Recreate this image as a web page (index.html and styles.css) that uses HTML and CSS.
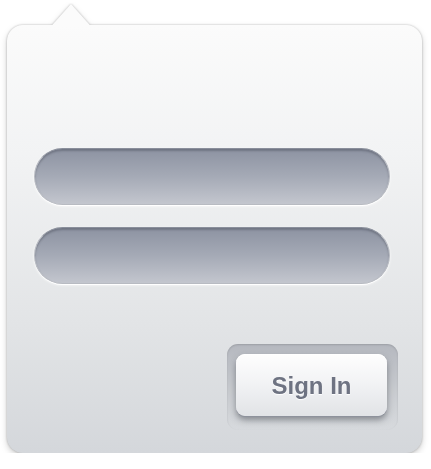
FILE: index.html
```html
<!DOCTYPE html>
<html>
<head>
<meta charset="utf-8">
<link rel="stylesheet" href="styles.css">
</head>
<body>
<div class="panel">
  <div class="fields">
    <div class="field"></div>
    <div class="field"></div>
  </div>
  <div class="actions">
    <div class="well">
      <button class="btn">Sign In</button>
    </div>
  </div>
</div>
</body>
</html>
```
FILE: styles.css
```css
html, body {
  margin: 0;
  padding: 0;
  background: #ffffff;
}
body {
  padding: 25px 0 0 7px;
  font-family: "Liberation Sans", Arial, sans-serif;
}
.panel {
  position: relative;
  width: 415px;
  height: 428px;
  box-sizing: border-box;
  border-radius: 16px;
  background: linear-gradient(to bottom, #fbfbfb 0%, #f2f3f4 30%, #e2e4e6 70%, #d4d7db 100%);
  filter: drop-shadow(0 0 1px rgba(0,0,0,0.25)) drop-shadow(0 3px 3px rgba(0,0,0,0.18));
  padding: 123px 32px 0 27px;
  display: flex;
  flex-direction: column;
}
.panel::before {
  content: "";
  position: absolute;
  left: 45px;
  top: -21px;
  width: 38px;
  height: 23px;
  background: #fbfbfb;
  clip-path: polygon(50% 0, 100% 92%, 100% 100%, 0 100%, 0 92%);
}
.fields {
  display: flex;
  flex-direction: column;
  gap: 22px;
}
.field {
  width: 356px;
  height: 57px;
  box-sizing: border-box;
  border-radius: 29px;
  background: linear-gradient(to bottom, #8d93a2 0%, #a5aab6 50%, #c3c6ce 100%);
  box-shadow: inset 0 2px 2px rgba(60,64,75,0.35), 0 1px 0 #ffffff, 0 1px 3px rgba(255,255,255,0.9);
  border: 1px solid #b8bbc2;
  border-top-color: #8a8f9b;
}
.actions {
  display: flex;
  justify-content: flex-end;
  margin-top: 60px;
  margin-right: -8px;
}
.well {
  width: 171px;
  height: 86px;
  box-sizing: border-box;
  border-radius: 11px;
  padding: 10px 11px 0 9px;
  background: linear-gradient(to bottom, #b5b8bf 0%, #c4c7cc 45%, rgba(214,216,220,0) 100%);
  box-shadow: inset 0 1px 2px rgba(0,0,0,0.14);
}
.btn {
  display: block;
  width: 151px;
  height: 62px;
  border: none;
  border-radius: 9px;
  background: linear-gradient(to bottom, #fefefe 0%, #f1f2f4 50%, #e1e3e6 100%);
  box-shadow: 0 1px 0 #8e929c, 0 4px 6px rgba(60,64,72,0.5), inset 0 1px 0 #ffffff;
  font-family: "Liberation Sans", Arial, sans-serif;
  font-weight: bold;
  font-size: 24px;
  color: #6e7382;
  text-shadow: 0 1px 1px #ffffff;
  padding: 0;
  padding-top: 2px;
}
```
